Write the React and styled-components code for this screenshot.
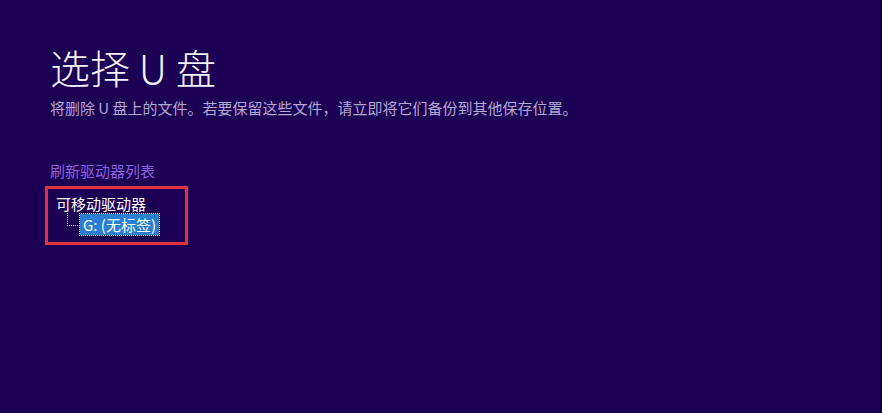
import React from "react";
import styled, { createGlobalStyle } from "styled-components";

const Global = createGlobalStyle`
  html, body { margin: 0; padding: 0; background: #1b0054; }
  body { font-family: "Noto Sans CJK SC", "Noto Sans", sans-serif; }
`;

const Page = styled.div`
  width: 882px;
  height: 413px;
  box-sizing: border-box;
  background: #1b0054;
  border-right: 2px solid #0e0030;
  padding: 40px 0 0 50px;
  display: flex;
  flex-direction: column;
  overflow: hidden;
`;

const Title = styled.h1`
  margin: 0;
  font-size: 40px;
  line-height: 54px;
  font-weight: 300;
  color: #f2f0f8;
  letter-spacing: 0;
`;

const Subtitle = styled.p`
  margin: 4px 0 0;
  font-size: 15px;
  line-height: 20px;
  color: #b3a8d6;
`;

const Link = styled.a`
  margin-top: 43px;
  font-size: 15px;
  line-height: 20px;
  color: #8a60de;
  cursor: pointer;
`;

const Highlight = styled.div`
  margin: 5px 0 0 -5px;
  width: 143px;
  height: 59px;
  box-sizing: border-box;
  border: 3px solid #e2303e;
  padding: 6px 0 0 8px;
  display: flex;
  flex-direction: column;
`;

const GroupLabel = styled.div`
  font-size: 15px;
  line-height: 18px;
  color: #ffffff;
`;

const TreeRow = styled.div`
  display: flex;
  align-items: flex-start;
  margin-left: 11px;
`;

const Connector = styled.div`
  width: 13px;
  height: 13px;
  box-sizing: border-box;
  border-left: 1px dotted #c8c8e0;
  border-bottom: 1px dotted #c8c8e0;
`;

const Item = styled.div`
  margin-top: 1px;
  padding: 0 3px;
  height: 21px;
  box-sizing: border-box;
  background: #2a7fd2;
  outline: 1px dotted #ffffff;
  font-size: 15px;
  line-height: 21px;
  color: #ffffff;
  white-space: nowrap;
`;

export default function App() {
  return (
    <>
      <Global />
      <Page>
        <Title>选择 U 盘</Title>
        <Subtitle>将删除 U 盘上的文件。若要保留这些文件，请立即将它们备份到其他保存位置。</Subtitle>
        <Link>刷新驱动器列表</Link>
        <Highlight>
          <GroupLabel>可移动驱动器</GroupLabel>
          <TreeRow>
            <Connector />
            <Item>G: (无标签)</Item>
          </TreeRow>
        </Highlight>
      </Page>
    </>
  );
}
